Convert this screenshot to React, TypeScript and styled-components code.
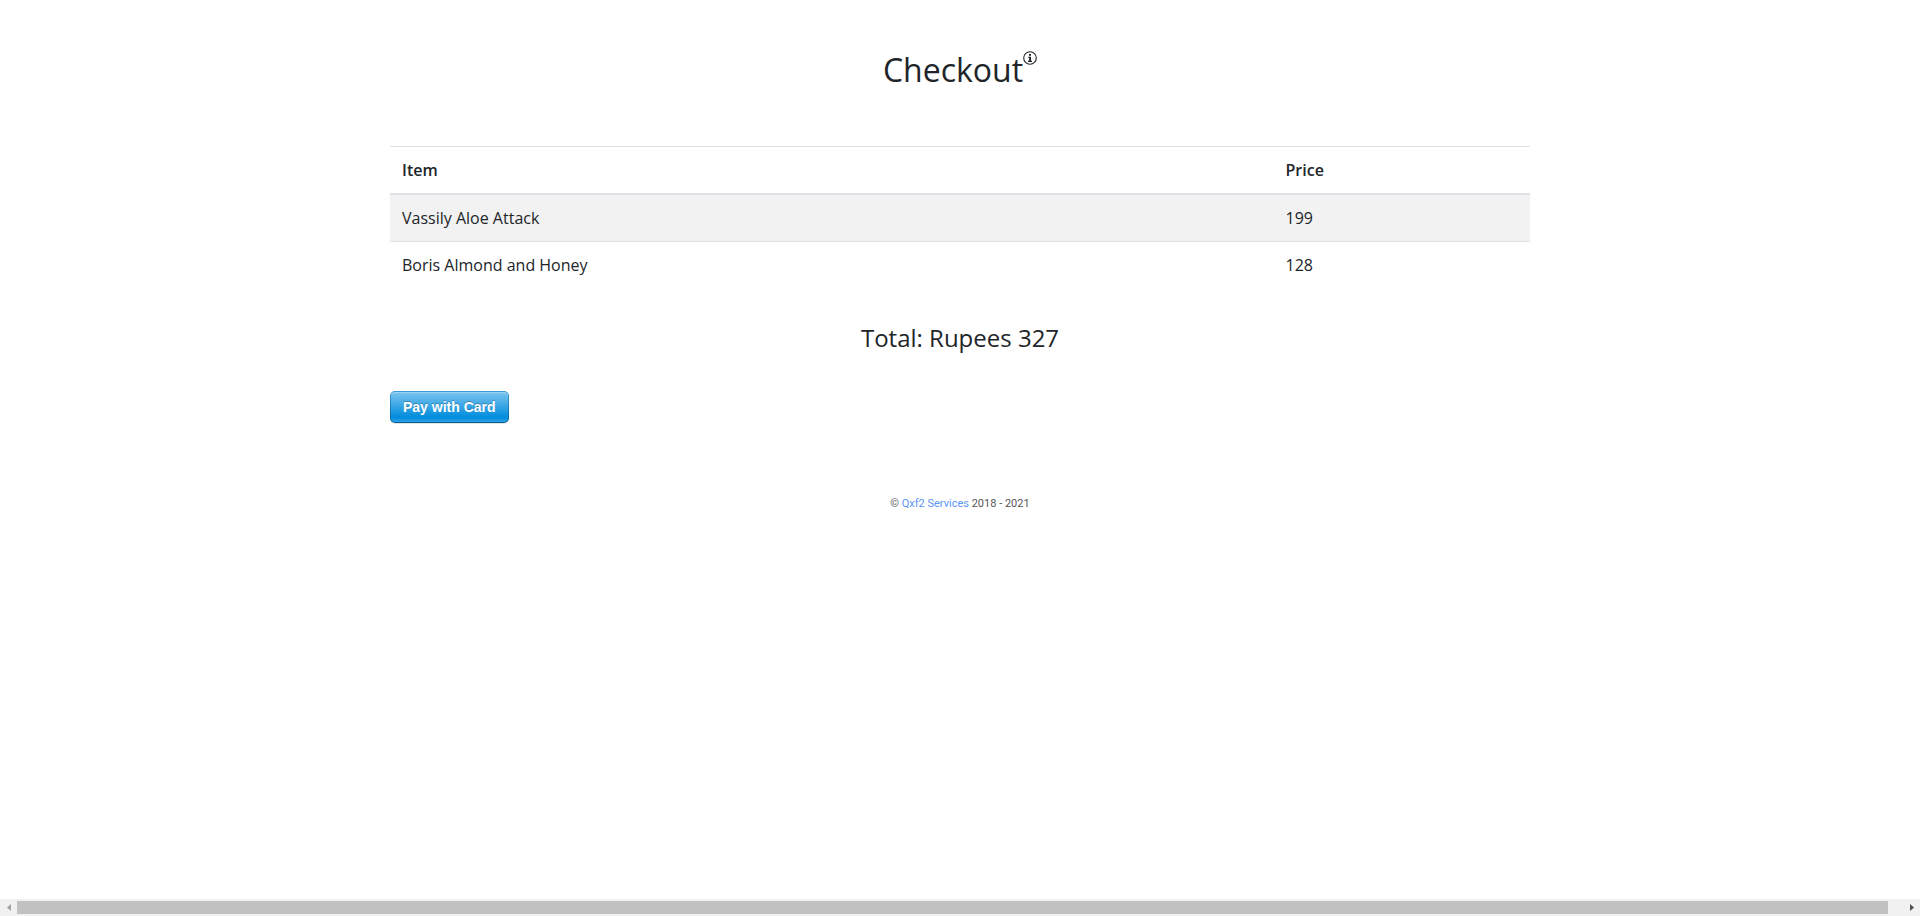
import React from "react";
import styled, { createGlobalStyle } from "styled-components";

const GlobalStyle = createGlobalStyle`
  *, *::before, *::after { box-sizing: border-box; }
  body {
    margin: 0;
    background: #fff;
    color: #212529;
    font-family: "Open Sans", sans-serif;
    font-size: 16px;
    line-height: 22px;
  }
`;

const Page = styled.div`
  display: flex;
  flex-direction: column;
  min-height: 100vh;
`;

const Container = styled.main`
  width: 100%;
  max-width: 1170px;
  margin: 0 auto;
  padding: 48px 15px 0;
`;

const TitleRow = styled.header`
  display: flex;
  justify-content: center;
  align-items: flex-start;
  margin-bottom: 54px;
`;

const Title = styled.h1`
  margin: 0;
  font-size: 32px;
  font-weight: 400;
  line-height: 44px;
`;

const InfoButton = styled.button`
  display: flex;
  margin: 3px 0 0;
  padding: 0;
  border: 0;
  background: none;
  color: inherit;
`;

const CartTable = styled.table`
  width: 100%;
  border-collapse: collapse;
  margin-bottom: 34px;
`;

const HeadCell = styled.th<{ $width: string }>`
  width: ${(p) => p.$width};
  padding: 12px;
  border-top: 1px solid #dee2e6;
  border-bottom: 2px solid #dee2e6;
  font-weight: 600;
  text-align: left;
`;

const ItemRow = styled.tr`
  &:nth-child(odd) { background: #f2f2f2; }
`;

const Cell = styled.td`
  padding: 12px;
  border-top: 1px solid #dee2e6;
`;

const Total = styled.p`
  margin: 0 0 37px;
  font-size: 24px;
  line-height: 32px;
  text-align: center;
`;

const PayButton = styled.button`
  display: block;
  height: 32px;
  padding: 1px;
  border: 0;
  border-radius: 5px;
  background: linear-gradient(#3c9cd8, #005d93);
  box-shadow: 0 1px 0 rgba(0, 0, 0, 0.1);
  cursor: pointer;
`;

const PayLabel = styled.span`
  display: block;
  height: 30px;
  padding: 0 12px;
  border-radius: 4px;
  background: linear-gradient(#7dc5ee, #008cdd 85%, #30a2e4);
  box-shadow: inset 0 1px 0 rgba(255, 255, 255, 0.25);
  color: #fff;
  font: bold 14px/30px "Liberation Sans", Arial, sans-serif;
  text-shadow: 0 -1px 0 rgba(0, 0, 0, 0.25);
`;

const Footer = styled.footer`
  margin-top: 73px;
  font: 11px/16px Roboto, sans-serif;
  text-align: center;
  color: #555;
`;

const FooterLink = styled.a`
  color: #5c96f8;
  text-decoration: none;
`;

const ScrollBar = styled.div`
  display: flex;
  height: 17px;
  margin-top: auto;
  background: #f1f1f1;
`;

const ScrollArrow = styled.button<{ $color: string }>`
  display: flex;
  align-items: center;
  justify-content: center;
  width: 17px;
  padding: 0;
  border: 0;
  background: none;
  color: ${(p) => p.$color};
`;

const ScrollTrack = styled.div`
  flex: 1;
  padding: 2px 15px 2px 0;
`;

const ScrollThumb = styled.div`
  height: 13px;
  background: #c1c1c1;
`;

const items = [
  { name: "Vassily Aloe Attack", price: 199 },
  { name: "Boris Almond and Honey", price: 128 },
];

export default function App() {
  return (
    <Page>
      <GlobalStyle />
      <Container>
        <TitleRow>
          <Title>Checkout</Title>
          <InfoButton type="button" aria-label="Checkout information">
            <svg width="14" height="14" viewBox="0 0 14 14" fill="none">
              <circle cx="7" cy="7" r="6.3" stroke="currentColor" strokeWidth="1.1" />
              <path d="M6 3h2v1.7H6zM5.2 5.7H8v4.1h1V11H5V9.800h1.100V6.800H5.200z" fill="currentColor" />
            </svg>
          </InfoButton>
        </TitleRow>
        <CartTable>
          <thead>
            <tr>
              <HeadCell scope="col" $width="77.5%">Item</HeadCell>
              <HeadCell scope="col" $width="22.5%">Price</HeadCell>
            </tr>
          </thead>
          <tbody>
            {items.map((item) => (
              <ItemRow key={item.name}>
                <Cell>{item.name}</Cell>
                <Cell>{item.price}</Cell>
              </ItemRow>
            ))}
          </tbody>
        </CartTable>
        <Total>Total: Rupees 327</Total>
        <PayButton type="button">
          <PayLabel>Pay with Card</PayLabel>
        </PayButton>
        <Footer>
          © <FooterLink href="#">Qxf2 Services</FooterLink> 2018 - 2021
        </Footer>
      </Container>
      <ScrollBar>
        <ScrollArrow type="button" aria-label="Scroll left" $color="#a3a3a3">
          <svg width="4" height="7" viewBox="0 0 4 7"><path d="M4 0v7L0 3.500z" fill="currentColor" /></svg>
        </ScrollArrow>
        <ScrollTrack>
          <ScrollThumb />
        </ScrollTrack>
        <ScrollArrow type="button" aria-label="Scroll right" $color="#505050">
          <svg width="4" height="7" viewBox="0 0 4 7"><path d="M0 0v7l4-3.500z" fill="currentColor" /></svg>
        </ScrollArrow>
      </ScrollBar>
    </Page>
  );
}
